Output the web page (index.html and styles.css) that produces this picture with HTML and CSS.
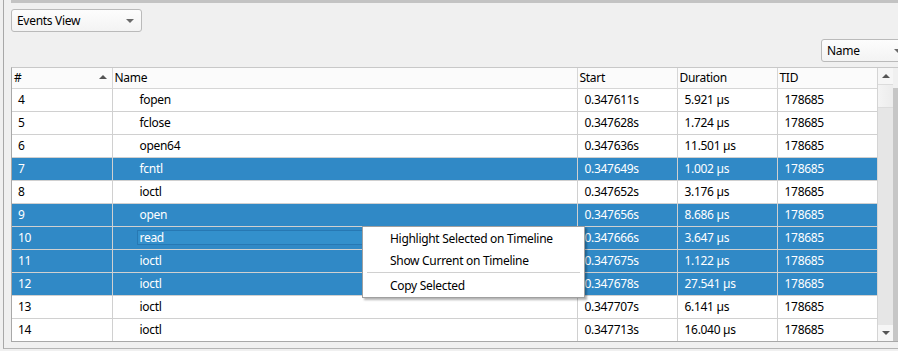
FILE: index.html
```html
<!DOCTYPE html>
<html lang="en">

<head>
   <meta charset="UTF-8">
   <meta name="viewport" content="width=device-width, initial-scale=1.0">
   <title>Events View</title>
   <link rel="stylesheet" href="styles.css">
</head>

<body>
   <main class="frame">
      <div class="topbar"></div>
      <div class="toolbar">
         <div class="combo view">Events View<span class="arrow"></span></div>
      </div>
      <div class="sortbar">
         <div class="combo sort">Name<span class="arrow"></span></div>
      </div>
      <div class="tablebox">
         <div class="tablearea">
            <table class="events">
               <colgroup>
                  <col class="c-num">
                  <col class="c-name">
                  <col class="c-start">
                  <col class="c-dur">
                  <col class="c-tid">
               </colgroup>
               <thead>
                  <tr>
                     <th class="num">#<span class="sort-up"></span></th>
                     <th>Name</th>
                     <th>Start</th>
                     <th>Duration</th>
                     <th>TID</th>
                  </tr>
               </thead>
               <tbody>
                  <tr><td class="num">4</td><td class="name">fopen</td><td>0.347611s</td><td>5.921 µs</td><td>178685</td></tr>
                  <tr><td class="num">5</td><td class="name">fclose</td><td>0.347628s</td><td>1.724 µs</td><td>178685</td></tr>
                  <tr><td class="num">6</td><td class="name">open64</td><td>0.347636s</td><td>11.501 µs</td><td>178685</td></tr>
                  <tr class="sel"><td class="num">7</td><td class="name">fcntl</td><td>0.347649s</td><td>1.002 µs</td><td>178685</td></tr>
                  <tr><td class="num">8</td><td class="name">ioctl</td><td>0.347652s</td><td>3.176 µs</td><td>178685</td></tr>
                  <tr class="sel"><td class="num">9</td><td class="name">open</td><td>0.347656s</td><td>8.686 µs</td><td>178685</td></tr>
                  <tr class="sel"><td class="num">10</td><td class="name current"><span class="focus">read</span></td><td>0.347666s</td><td>3.647 µs</td><td>178685</td></tr>
                  <tr class="sel"><td class="num">11</td><td class="name">ioctl</td><td>0.347675s</td><td>1.122 µs</td><td>178685</td></tr>
                  <tr class="sel"><td class="num">12</td><td class="name">ioctl</td><td>0.347678s</td><td>27.541 µs</td><td>178685</td></tr>
                  <tr><td class="num">13</td><td class="name">ioctl</td><td>0.347707s</td><td>6.141 µs</td><td>178685</td></tr>
                  <tr><td class="num">14</td><td class="name">ioctl</td><td>0.347713s</td><td>16.040 µs</td><td>178685</td></tr>
               </tbody>
            </table>
         </div>
         <div class="scrollbar">
            <div class="sb-btn"><span class="tri-up"></span></div>
            <div class="sb-thumb"></div>
            <div class="sb-track"></div>
            <div class="sb-btn"><span class="tri-down"></span></div>
         </div>
         <div class="edge"></div>
      </div>
      <ul class="menu">
         <li>Highlight Selected on Timeline</li>
         <li>Show Current on Timeline</li>
         <li class="sep"></li>
         <li>Copy Selected</li>
      </ul>
   </main>
</body>

</html>
```

FILE: styles.css
```css
* {
   padding: 0;
   margin: 0;
   box-sizing: border-box;
}

body {
   background: #f0f0f0;
   font-family: "Noto Sans", "Open Sans", sans-serif;
   font-size: 12px;
   letter-spacing: -0.3px;
   color: #000;
   width: 898px;
   height: 351px;
   overflow: hidden;
}

.frame {
   position: relative;
   margin-left: 3px;
   height: 349px;
   border-left: 1px solid #a8a8a8;
   border-bottom: 1px solid #b4b4b4;
}

.topbar {
   margin-left: 7px;
   height: 3px;
   background: #c3c3c3;
}

.toolbar {
   padding: 6px 0 0 7px;
   height: 36px;
}

.combo {
   position: relative;
   height: 23px;
   line-height: 21px;
   padding-left: 5px;
   border: 1px solid #bababa;
   border-radius: 3px;
   background: linear-gradient(#fdfdfd, #f3f3f3);
}

.view {
   width: 131px;
}

.arrow {
   position: absolute;
   right: 7px;
   top: 9px;
   border-left: 4px solid transparent;
   border-right: 4px solid transparent;
   border-top: 4px solid #6a6a6a;
}

.sortbar {
   display: flex;
   justify-content: flex-end;
   height: 28px;
   margin-right: -12px;
}

.sort {
   flex: 0 0 89px;
}

.tablebox {
   display: flex;
   margin-left: 7px;
   width: 887px;
   height: 275px;
   border-top: 1px solid #c8c8c8;
   border-left: 1px solid #a8a8a8;
   border-bottom: 1px solid #a8a8a8;
}

.tablearea {
   width: 865px;
   overflow: hidden;
   background: #fff;
}

.events {
   border-collapse: collapse;
   table-layout: fixed;
   width: 865px;
}

.c-num { width: 100px; }
.c-name { width: 465px; }
.c-start { width: 100px; }
.c-dur { width: 100px; }
.c-tid { width: 100px; }

.events th {
   position: relative;
   height: 20px;
   font-weight: normal;
   text-align: left;
   padding-left: 2px;
   background: #fbfbfb;
   border-right: 1px solid #d6d6d6;
   border-bottom: 1px solid #d6d6d6;
   white-space: nowrap;
}

.events th:last-child {
   border-right: none;
}

.sort-up {
   position: absolute;
   right: 5px;
   top: 7px;
   border-left: 4px solid transparent;
   border-right: 4px solid transparent;
   border-bottom: 4px solid #555;
}

.events td {
   height: 23px;
   padding-left: 7px;
   border-right: 1px solid #d0d0d0;
   border-bottom: 1px solid #d0d0d0;
   white-space: nowrap;
}

.events td.num {
   padding-left: 6px;
}

.events td.name {
   padding-left: 27px;
}

.sel td {
   background: #3089c6;
   color: #fff;
}

.focus {
   display: block;
   margin-left: -3px;
   margin-right: -2px;
   height: 15px;
   line-height: 13px;
   padding-left: 2px;
   border: 1px solid #2778b3;
   background: #3390cc;
}

.scrollbar {
   width: 16px;
   display: flex;
   flex-direction: column;
   background: #e6e6e6;
   border-left: 1px solid #d4d4d4;
}

.sb-btn {
   height: 16px;
   display: flex;
   justify-content: center;
   align-items: center;
   background: #f6f6f6;
}

.sb-thumb {
   height: 24px;
   background: linear-gradient(90deg, #f4f4f4, #ececec);
   border-top: 1px solid #dcdcdc;
   border-bottom: 1px solid #dcdcdc;
}

.sb-track {
   flex: 1;
}

.tri-up {
   border-left: 4px solid transparent;
   border-right: 4px solid transparent;
   border-bottom: 4px solid #555;
}

.tri-down {
   border-left: 4px solid transparent;
   border-right: 4px solid transparent;
   border-top: 4px solid #555;
}

.edge {
   width: 5px;
   margin-top: 20px;
   background: #c6c6c6;
}

.menu {
   position: absolute;
   left: 358px;
   top: 226px;
   width: 223px;
   list-style: none;
   background: #fff;
   border: 1px solid #a0a0a0;
   padding: 1px 0 0;
   box-shadow: 2px 2px 2px rgba(0, 0, 0, 0.3);
}

.menu li {
   height: 22px;
   line-height: 21px;
   padding-left: 27px;
}

.menu li.sep {
   height: 1px;
   margin: 0 4px 2px 4px;
   background: #d0d0d0;
}
```
